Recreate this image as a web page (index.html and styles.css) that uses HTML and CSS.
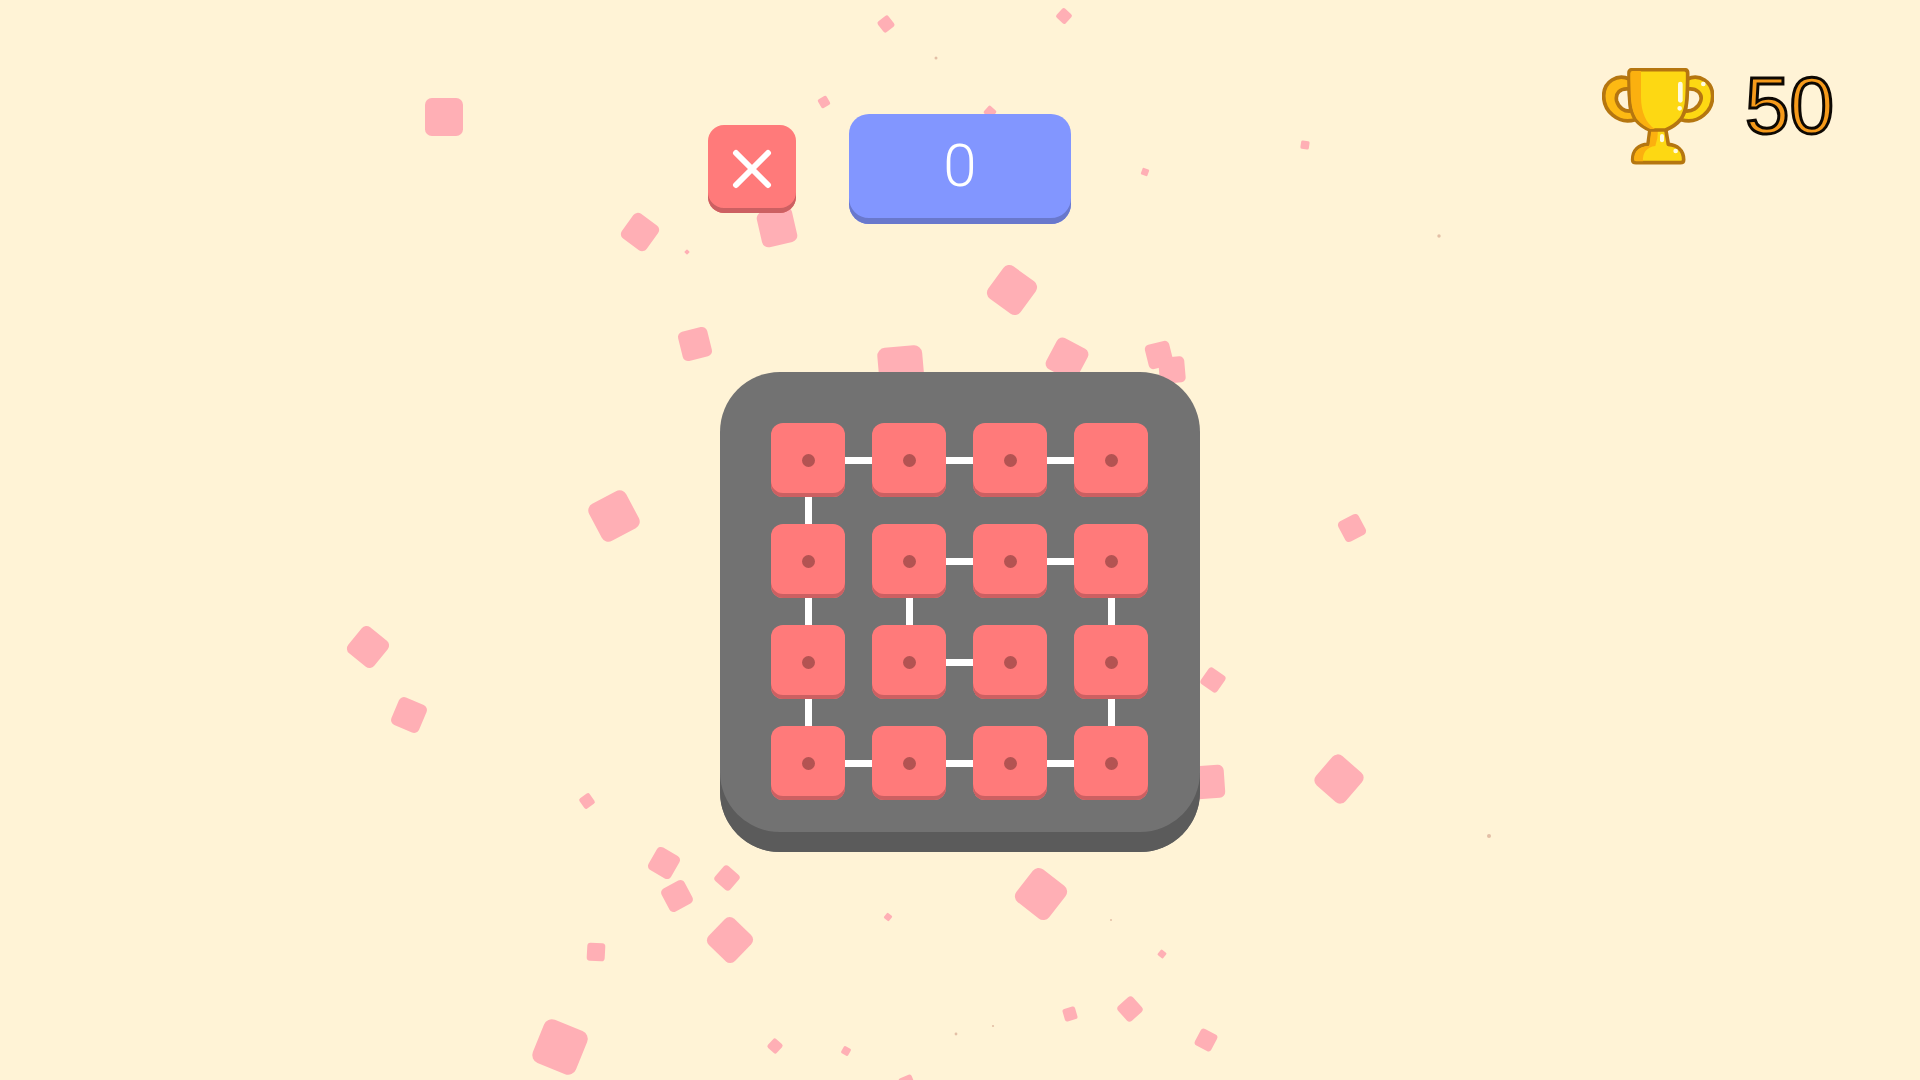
FILE: index.html
```html
<!DOCTYPE html>
<html lang="en">
<head>
<meta charset="utf-8">
<meta name="viewport" content="width=device-width, initial-scale=1">
<title>Dot Grid</title>
<link rel="stylesheet" href="styles.css">
</head>
<body>
<svg class="confetti" viewBox="0 0 1920 1080" preserveAspectRatio="xMidYMin slice" aria-hidden="true">
  <defs><rect id="bit" x="-50" y="-50" width="100" height="100" rx="18"/></defs>
  <g class="bits">
    <use href="#bit" transform="translate(444 117) scale(.38)"/>
    <use href="#bit" transform="translate(640 232) rotate(36) scale(.306)"/>
    <use href="#bit" transform="translate(777 227) rotate(-13) scale(.36)"/>
    <use href="#bit" transform="translate(695 344) rotate(-14) scale(.3)"/>
    <use href="#bit" transform="translate(687 252) rotate(45) scale(.04)"/>
    <use href="#bit" transform="translate(824 102) rotate(-30) scale(.1)"/>
    <use href="#bit" transform="translate(886 24) rotate(-38) scale(.135)"/>
    <use href="#bit" transform="translate(1064 16) rotate(43) scale(.125)"/>
    <use href="#bit" transform="translate(990 112) rotate(42) scale(.1)"/>
    <use href="#bit" transform="translate(1145 172) rotate(20) scale(.07)"/>
    <use href="#bit" transform="translate(1305 145) rotate(8) scale(.085)"/>
    <use href="#bit" transform="translate(1012 290) rotate(36) scale(.4)"/>
    <use href="#bit" transform="translate(901 369) rotate(-5) scale(.45)"/>
    <use href="#bit" transform="translate(1067 359) rotate(28) scale(.35)"/>
    <use href="#bit" transform="translate(1159 355) rotate(-14) scale(.25)"/>
    <use href="#bit" transform="translate(1172 370) rotate(-5) scale(.26)"/>
    <use href="#bit" transform="translate(614 516) rotate(-28) scale(.42)"/>
    <use href="#bit" transform="translate(368 647) rotate(39) scale(.335)"/>
    <use href="#bit" transform="translate(409 715) rotate(23) scale(.3)"/>
    <use href="#bit" transform="translate(587 801) rotate(-35) scale(.125)"/>
    <use href="#bit" transform="translate(664 863) rotate(30) scale(.26)"/>
    <use href="#bit" transform="translate(677 896) rotate(-28) scale(.26)"/>
    <use href="#bit" transform="translate(727 878) rotate(41) scale(.2)"/>
    <use href="#bit" transform="translate(730 940) rotate(44) scale(.365)"/>
    <use href="#bit" transform="translate(596 952) rotate(3) scale(.18)"/>
    <use href="#bit" transform="translate(560 1047) rotate(22) scale(.465)"/>
    <use href="#bit" transform="translate(888 917) rotate(40) scale(.065)"/>
    <use href="#bit" transform="translate(775 1046) rotate(42) scale(.12)"/>
    <use href="#bit" transform="translate(846 1051) rotate(30) scale(.08)"/>
    <use href="#bit" transform="translate(907 1083) rotate(-22) scale(.14)"/>
    <use href="#bit" transform="translate(1041 894) rotate(38) scale(.415)"/>
    <use href="#bit" transform="translate(1070 1014) rotate(-16) scale(.13)"/>
    <use href="#bit" transform="translate(1162 954) rotate(40) scale(.07)"/>
    <use href="#bit" transform="translate(1130 1009) rotate(48) scale(.2)"/>
    <use href="#bit" transform="translate(1206 1040) rotate(28) scale(.185)"/>
    <use href="#bit" transform="translate(1352 528) rotate(-28) scale(.23)"/>
    <use href="#bit" transform="translate(1213 680) rotate(35) scale(.2)"/>
    <use href="#bit" transform="translate(1339 779) rotate(41) scale(.39)"/>
    <use href="#bit" transform="translate(1208 782) rotate(-4) scale(.33)"/>
  </g>
  <g class="specks">
    <circle cx="936" cy="58" r="1.5"/>
    <circle cx="1439" cy="236" r="1.7"/>
    <circle cx="1489" cy="836" r="2"/>
    <circle cx="956" cy="1034" r="1.4"/>
    <circle cx="993" cy="1026" r="1.1"/>
    <circle cx="1111" cy="920" r="1"/>
  </g>
</svg>

<main class="game">
  <header class="top">
    <button class="close" type="button" aria-label="Close">
      <svg viewBox="0 0 40 40" width="40" height="40" aria-hidden="true"><path d="M4 4 36 36M36 4 4 36"/></svg>
    </button>
    <output class="score">0</output>
    <div class="trophies">
      <svg class="cup" viewBox="66 53 336 291" aria-hidden="true">
        <path class="amber" fill-rule="evenodd" d="M148 86C112 70 71 93 71 137C71 180 112 224 166 208L178 180ZM148 116C119 112 105 130 110 152C116 173 133 184 152 182Z"/>
        <path class="gold" fill-rule="evenodd" d="M322 86C358 70 398 93 398 137C398 180 358 224 303 208L290 180ZM322 116C350 112 369 130 362 152C355 173 336 184 316 182Z"/>
        <path class="gold" d="M210 236L204 282C176 282 158 300 158 328Q158 337 168 337H301Q311 337 311 328C311 298 290 284 265 282L257 236Z"/>
        <path class="shade" d="M214 240H234Q234 264 226 287C199 290 187 309 189 333H168Q162 333 162 327C162 300 180 288 208 286Z"/>
        <path class="gold" d="M158 58H313Q323 58 323 68V86C322 150 321 178 303 206C287 226 264 236 257 239H210C202 236 181 226 166 207C148 178 148 150 147 86V68Q147 58 158 58Z"/>
        <path class="shade" d="M158 62H183V140C183 185 198 220 225 236H211C203 232 184 223 170 205C153 176 152 150 151 86V69Q151 62 158 62Z"/>
        <path class="shine" d="M301 101V150" stroke-width="14"/>
        <path class="shine" d="M299 174V174M370 101V101M287 302V302" stroke-width="14"/>
        <path class="shine" d="M246 257V270" stroke-width="12"/>
      </svg>
      <span class="count">50</span>
    </div>
  </header>

  <section class="board" aria-label="Board">
    <button class="tile" type="button" aria-label="Row 1, column 1"></button><i class="link"></i><button class="tile" type="button" aria-label="Row 1, column 2"></button><i class="link"></i><button class="tile" type="button" aria-label="Row 1, column 3"></button><i class="link"></i><button class="tile" type="button" aria-label="Row 1, column 4"></button>
    <i class="link down"></i><i></i><i></i><i></i><i></i><i></i><i></i>
    <button class="tile" type="button" aria-label="Row 2, column 1"></button><i></i><button class="tile" type="button" aria-label="Row 2, column 2"></button><i class="link"></i><button class="tile" type="button" aria-label="Row 2, column 3"></button><i class="link"></i><button class="tile" type="button" aria-label="Row 2, column 4"></button>
    <i class="link down"></i><i></i><i class="link down"></i><i></i><i></i><i></i><i class="link down"></i>
    <button class="tile" type="button" aria-label="Row 3, column 1"></button><i></i><button class="tile" type="button" aria-label="Row 3, column 2"></button><i class="link"></i><button class="tile" type="button" aria-label="Row 3, column 3"></button><i></i><button class="tile" type="button" aria-label="Row 3, column 4"></button>
    <i class="link down"></i><i></i><i></i><i></i><i></i><i></i><i class="link down"></i>
    <button class="tile" type="button" aria-label="Row 4, column 1"></button><i class="link"></i><button class="tile" type="button" aria-label="Row 4, column 2"></button><i class="link"></i><button class="tile" type="button" aria-label="Row 4, column 3"></button><i class="link"></i><button class="tile" type="button" aria-label="Row 4, column 4"></button>
  </section>
</main>
</body>
</html>
```
FILE: styles.css
```css
* { box-sizing: border-box; }

body {
  margin: 0;
  min-height: 100vh;
  background: #fff3d6;
  font-family: "Liberation Sans", Arial, sans-serif;
}

button {
  padding: 0;
  border: 0;
  cursor: pointer;
}

/* Decorative layer behind the game */
.confetti {
  position: fixed;
  inset: 0;
  width: 100%;
  height: 100%;
}
.bits { fill: #ffafb5; }
.specks { fill: #e3bfa6; }

.game {
  position: relative;
  display: flex;
  flex-direction: column;
  align-items: center;
  gap: 148px;
  padding: 68px 0;
}

.top {
  display: grid;
  grid-template-columns: 1fr auto 1fr;
  align-items: start;
  column-gap: 53px;
  width: 100%;
}

.close {
  display: grid;
  place-items: center;
  justify-self: end;
  width: 88px;
  height: 88px;
  margin-top: 57px;
  border-radius: 16px;
  background: #ff7a7a;
  box-shadow: inset 0 -5px #cc6062;
}
.close path {
  fill: none;
  stroke: #fff;
  stroke-width: 6;
  stroke-linecap: round;
}

.score {
  display: block;
  width: 222px;
  height: 110px;
  margin-top: 46px;
  border-radius: 20px;
  background: #8296ff;
  box-shadow: inset 0 -6px #6978cc;
  color: #fff;
  font: 300 60px/104px Roboto, sans-serif;
  text-align: center;
}

.trophies {
  display: flex;
  align-items: flex-start;
  justify-self: end;
  gap: 31px;
  padding-right: 86px;
}
.cup {
  width: 112px;
  height: 97px;
}
.gold, .amber {
  stroke: #b57610;
  stroke-width: 11;
  stroke-linejoin: round;
}
.gold { fill: #fdd813; }
.amber { fill: #fdb913; }
.shade { fill: #fbb00f; }
.shine {
  fill: none;
  stroke: #fffbe0;
  stroke-linecap: round;
}
.count {
  color: #f59a1b;
  font-size: 80px;
  line-height: 75px;
  -webkit-text-stroke: 3px #0d0803;
}

/* Tiles sit in the wide tracks, links in the narrow ones */
.board {
  display: grid;
  grid-template-columns: 74px repeat(3, 27px 74px);
  grid-template-rows: 74px repeat(3, 27px 74px);
  padding: 51px 52px 52px 51px;
  border-radius: 60px;
  background: #727272;
  box-shadow: inset 0 -20px #5b5b5b;
}
.tile {
  display: grid;
  place-items: center;
  border-radius: 12px;
  background: #ff7a7a;
  box-shadow: inset 0 -4px #cc6062;
}
.tile::before {
  content: "";
  width: 13px;
  height: 13px;
  border-radius: 50%;
  background: #b35352;
}
.link {
  align-self: center;
  height: 7px;
  background: #fff;
}
.link.down {
  align-self: stretch;
  justify-self: center;
  width: 7px;
  height: auto;
}
```
